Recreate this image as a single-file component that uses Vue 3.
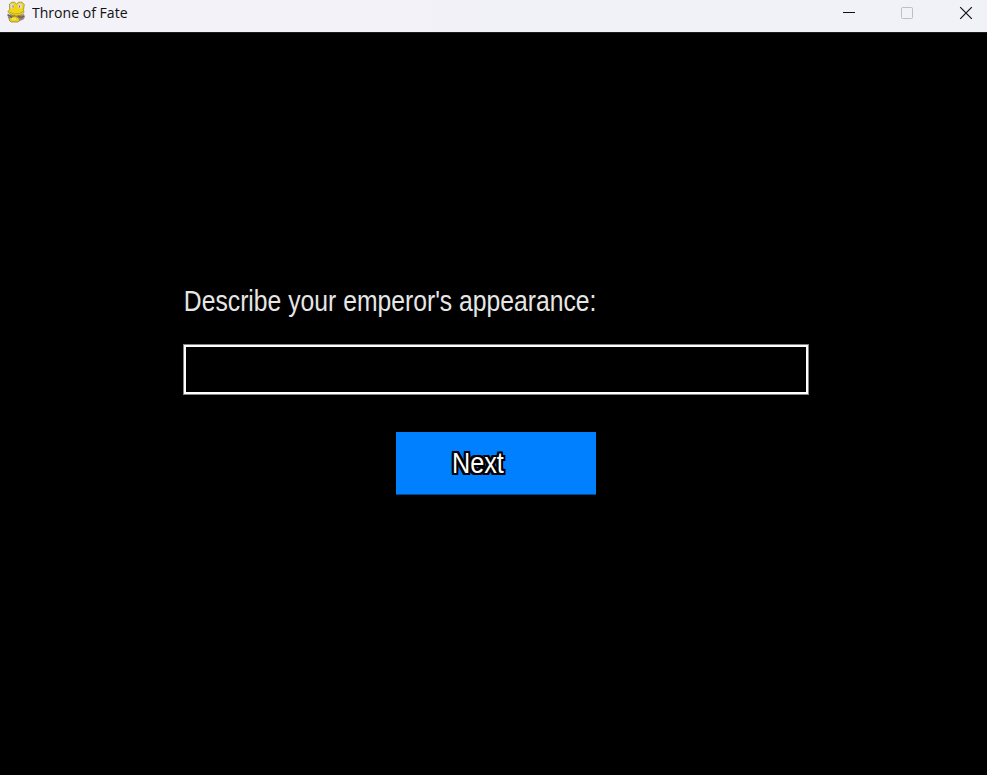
<script setup>
import { ref } from 'vue'

const appearance = ref('')
</script>

<template>
  <div class="window">
    <header class="titlebar">
      <svg class="logo" width="20" height="22" viewBox="0 0 20 22">
        <path d="M1.5 12.5 4 14l3-1 8 1 3-1 1 3-1.5 2.5-4 1.5-9-.5-2.5-2.5Z" fill="#8d9290" />
        <path d="M3.5 3 6 1.2h2.5L10.5 3l2-1.8H16L18.3 3.5 17.5 9l.5 2.5-3 2.5-5 1-6-1.5L2 10.5l1.5-2Z" fill="#f1d51d" stroke="#93842a" stroke-width=".7" />
        <path d="M4 16.5 9 15l4 2.2 1 2.3-2.5 1.5H5l-2-2Z" fill="#edcf22" stroke="#84762b" stroke-width=".7" />
        <path d="M3.5 11 8 13l5.5-.5 3.5-2" fill="none" stroke="#c5a81c" />
        <path d="M1.5 14 4 15l2 1.5M12 15l3 2 3-2" fill="none" stroke="#5a6261" stroke-width="1.3" />
        <ellipse cx="6.2" cy="5" rx="1.8" ry="2.6" fill="#deded3" />
        <ellipse cx="14" cy="5" rx="2" ry="2.6" fill="#deded3" />
        <path d="M6.5 4.5h1v2h-1zM13 4.5h1v2h-1z" fill="#77756a" />
        <path d="M14 15h2v2h-2z" fill="#c0524b" />
        <path d="M6 17.5h4v1H6z" fill="#fff074" />
      </svg>
      <span class="title">Throne of Fate</span>
      <div class="controls">
        <svg width="14" height="14" viewBox="0 0 14 14"><path d="M2 6.5h12" stroke="#111" /></svg>
        <svg width="14" height="14" viewBox="0 0 14 14"><rect x="1.5" y="1.5" width="11" height="11" rx="1" fill="none" stroke="#bebfc3" /></svg>
        <svg width="14" height="14" viewBox="0 0 14 14"><path d="m1.2 1.2 11.6 11.6m0-11.6L1.2 12.8" stroke="#111" stroke-width="1.2" /></svg>
      </div>
    </header>
    <main class="scene">
      <label class="prompt" for="appearance">Describe your emperor's appearance:</label>
      <input id="appearance" v-model="appearance" class="field" type="text" autocomplete="off" />
      <button class="next" type="button"><span class="caption">Next</span></button>
    </main>
  </div>
</template>

<style>
body {
  margin: 0;
  background: #000;
}
</style>

<style scoped>
.window {
  display: flex;
  flex-direction: column;
  height: 100vh;
  overflow: hidden;
  background: #000;
}
.titlebar {
  display: flex;
  align-items: flex-start;
  box-sizing: border-box;
  height: 32px;
  flex: none;
  padding: 1px 14px 0 6px;
  background: linear-gradient(90deg, #f3f2f8, #f0f2f8);
}
.logo {
  flex: none;
}
.title {
  margin-left: 6px;
  font: 14.5px/24px "Open Sans", "Noto Sans", sans-serif;
  color: #111;
  transform: scaleX(0.97);
  transform-origin: 0 0;
  white-space: nowrap;
}
.controls {
  display: flex;
  gap: 45px;
  margin-left: auto;
  padding-top: 5px;
}
.controls svg {
  display: block;
}
.scene {
  display: flex;
  flex-direction: column;
  align-items: flex-start;
  padding: 252px 0 0 183px;
  border-top: 1px solid #1c1c1c;
  margin-top: 0;
  font-family: "Liberation Sans", Arial, sans-serif;
}
.prompt {
  height: 34px;
  margin-top: -1px;
  padding-left: 1px;
  font-size: 29px;
  line-height: 34px;
  color: #e6e6e6;
  white-space: nowrap;
  transform: scaleX(0.852);
  transform-origin: 0 0;
}
.field {
  box-sizing: border-box;
  width: 626px;
  height: 51px;
  margin-top: 26px;
  padding: 0 8px;
  border: 1px solid #858585;
  border-radius: 0;
  outline: none;
  background: #000;
  box-shadow: inset 0 0 0 2px #fff;
  color: #fff;
  font: 25px "Liberation Sans", Arial, sans-serif;
}
.next {
  display: flex;
  align-items: center;
  box-sizing: border-box;
  width: 200px;
  height: 63px;
  margin: 37px 0 0 213px;
  padding: 0 0 0 56px;
  border: 0;
  border-bottom: 1px solid #004890;
  background: #0080ff;
  color: #fff;
  font: 29px/34px "Liberation Sans", Arial, sans-serif;
}
.caption {
  transform: scaleX(0.87);
  transform-origin: 0 50%;
  text-shadow:
    -2.3px -2px #000, -1px -2px #000, 0 -2px #000, 1px -2px #000, 2.3px -2px #000,
    -2.3px 0 #000, 2.3px 0 #000, -1px 0 #000, 1px 0 #000,
    -2.3px 2px #000, -1px 2px #000, 0 2px #000, 1px 2px #000, 2.3px 2px #000;
}
</style>
